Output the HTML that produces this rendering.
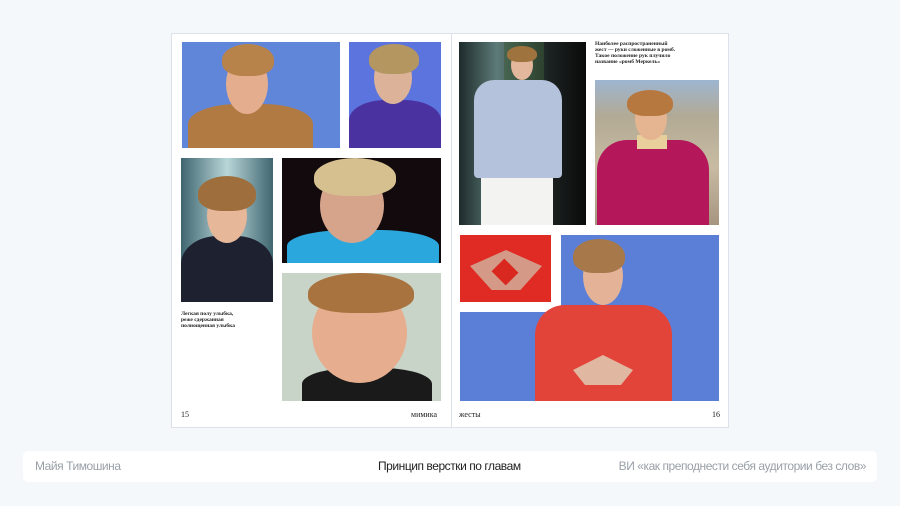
<!DOCTYPE html>
<html><head><meta charset="utf-8"><style>
*{margin:0;padding:0;box-sizing:border-box}
body{width:900px;height:506px;background:#f5f8fb;position:relative;overflow:hidden;font-family:"Liberation Sans",sans-serif}
.page{position:absolute;top:33px;height:395px;background:#fff;border:1px solid #dde2ea}
.p{position:absolute;overflow:hidden}
.p div{position:absolute}
.hair{border-radius:50% 50% 40% 40%}
.face{border-radius:50%}
.body{border-radius:40% 40% 0 0}
.cap{position:absolute;font-family:"Liberation Serif",serif;font-size:5.5px;line-height:6px;color:#222;font-weight:bold}
.num{position:absolute;font-family:"Liberation Serif",serif;font-size:8px;color:#222}
.bar{position:absolute;left:23px;top:451px;width:854px;height:31px;background:#fff;border-radius:5px;font-size:12px;letter-spacing:-0.45px}
.bar span{position:absolute;top:8px}
</style></head><body>
<div class="page" style="left:171px;width:281px"></div>
<div class="page" style="left:451px;width:278px"></div>

<div class="p" style="left:182px;top:42px;width:158px;height:106px;background:#5f86d9">
 <div class="body" style="left:6px;top:62px;width:125px;height:50px;background:#b27a43"></div>
 <div class="face" style="left:44px;top:12px;width:42px;height:60px;background:#e4ae8e"></div>
 <div class="hair" style="left:40px;top:2px;width:52px;height:32px;background:#b7834a"></div>
</div>
<div class="p" style="left:349px;top:42px;width:92px;height:106px;background:#5c74dd">
 <div class="body" style="left:0;top:58px;width:92px;height:50px;background:#4a32a0"></div>
 <div class="face" style="left:25px;top:10px;width:38px;height:52px;background:#dcb299"></div>
 <div class="hair" style="left:20px;top:2px;width:50px;height:30px;background:#b49660"></div>
</div>
<div class="p" style="left:181px;top:158px;width:92px;height:144px;background:linear-gradient(90deg,#3f6670,#b8d6d8 50%,#3f6670)">
 <div class="body" style="left:0;top:78px;width:92px;height:70px;background:#1e2230"></div>
 <div class="face" style="left:26px;top:30px;width:40px;height:55px;background:#e7b79a"></div>
 <div class="hair" style="left:17px;top:18px;width:58px;height:35px;background:#9e6f3c"></div>
</div>
<div class="p" style="left:282px;top:158px;width:159px;height:105px;background:#120a0c">
 <div class="body" style="left:5px;top:72px;width:152px;height:40px;background:#2aa8dd"></div>
 <div class="face" style="left:38px;top:10px;width:64px;height:75px;background:#d5a48a"></div>
 <div class="hair" style="left:32px;top:0;width:82px;height:38px;background:#d7c08f"></div>
</div>
<div class="p" style="left:282px;top:273px;width:159px;height:128px;background:#c9d4c8">
 <div class="body" style="left:20px;top:95px;width:130px;height:40px;background:#1a1a1a"></div>
 <div class="face" style="left:30px;top:10px;width:95px;height:100px;background:#e6ad8e"></div>
 <div class="hair" style="left:26px;top:0;width:106px;height:40px;background:#a8733f"></div>
</div>
<div class="cap" style="left:181px;top:311px">Легкая полу улыбка,<br>реже сдержанная<br>полнощенная улыбка</div>
<div class="num" style="left:181px;top:410px">15</div>
<div class="num" style="left:411px;top:410px">мимика</div>

<div class="p" style="left:459px;top:42px;width:127px;height:183px;background:linear-gradient(90deg,#1d2b2b,#5d7b78 30%,#1c2322 70%,#0a0a0a)">
 <div style="left:45px;top:0;width:40px;height:40px;background:#3a5a36;opacity:.5"></div>
 <div style="left:22px;top:120px;width:72px;height:63px;background:#f3f3f2"></div>
 <div class="body" style="left:15px;top:38px;width:88px;height:98px;background:#b5c2db;border-radius:20px 20px 4px 4px"></div>
 <div class="face" style="left:52px;top:8px;width:22px;height:30px;background:#e3b79c"></div>
 <div class="hair" style="left:48px;top:4px;width:30px;height:16px;background:#9f733d"></div>
</div>
<div class="cap" style="left:595px;top:41px">Наиболее распространенный<br>жест — руки сложенные в ромб.<br>Такое положение рук плучило<br>название «ромб Меркель»</div>
<div class="p" style="left:595px;top:80px;width:124px;height:145px;background:linear-gradient(180deg,#9eb5d0 0,#b2aa95 25%,#c8bba2 60%,#a69580)">
 <div class="body" style="left:2px;top:60px;width:112px;height:90px;background:#b4175a;border-radius:30px 30px 0 0"></div>
 <div style="left:42px;top:55px;width:30px;height:14px;background:#e9cf9c"></div>
 <div class="face" style="left:40px;top:18px;width:32px;height:42px;background:#e5b490"></div>
 <div class="hair" style="left:32px;top:10px;width:46px;height:26px;background:#b6783f"></div>
</div>
<div class="p" style="left:460px;top:235px;width:91px;height:67px;background:#df2b23">
 <div style="left:10px;top:15px;width:72px;height:40px;background:#d49a87;clip-path:polygon(0 40%,50% 0,100% 40%,70% 100%,30% 100%)"></div>
 <div style="left:35px;top:28px;width:20px;height:18px;background:#d9281f;transform:rotate(45deg)"></div>
</div>
<div class="p" style="left:561px;top:235px;width:158px;height:166px;background:#5b7fd6"></div>
<div class="p" style="left:460px;top:312px;width:101px;height:89px;background:#5b7fd6"></div>
<div class="p" style="left:535px;top:235px;width:184px;height:166px">
 <div class="body" style="left:0;top:70px;width:137px;height:100px;background:#e2443a;border-radius:30px 30px 0 0"></div>
 <div class="face" style="left:48px;top:12px;width:40px;height:58px;background:#e4b297"></div>
 <div class="hair" style="left:38px;top:4px;width:52px;height:34px;background:#a7794a"></div>
 <div style="left:38px;top:120px;width:60px;height:30px;background:#e0b7a0;clip-path:polygon(0 50%,50% 0,100% 50%,80% 100%,20% 100%)"></div>
</div>
<div class="num" style="left:459px;top:410px">жесты</div>
<div class="num" style="left:712px;top:410px">16</div>

<div class="bar">
 <span style="left:12px;color:#9aa0a8">Майя Тимошина</span>
 <span style="left:355px;color:#222">Принцип верстки по главам</span>
 <span style="right:11px;color:#9aa0a8">ВИ «как преподнести себя аудитории без слов»</span>
</div>
</body></html>
